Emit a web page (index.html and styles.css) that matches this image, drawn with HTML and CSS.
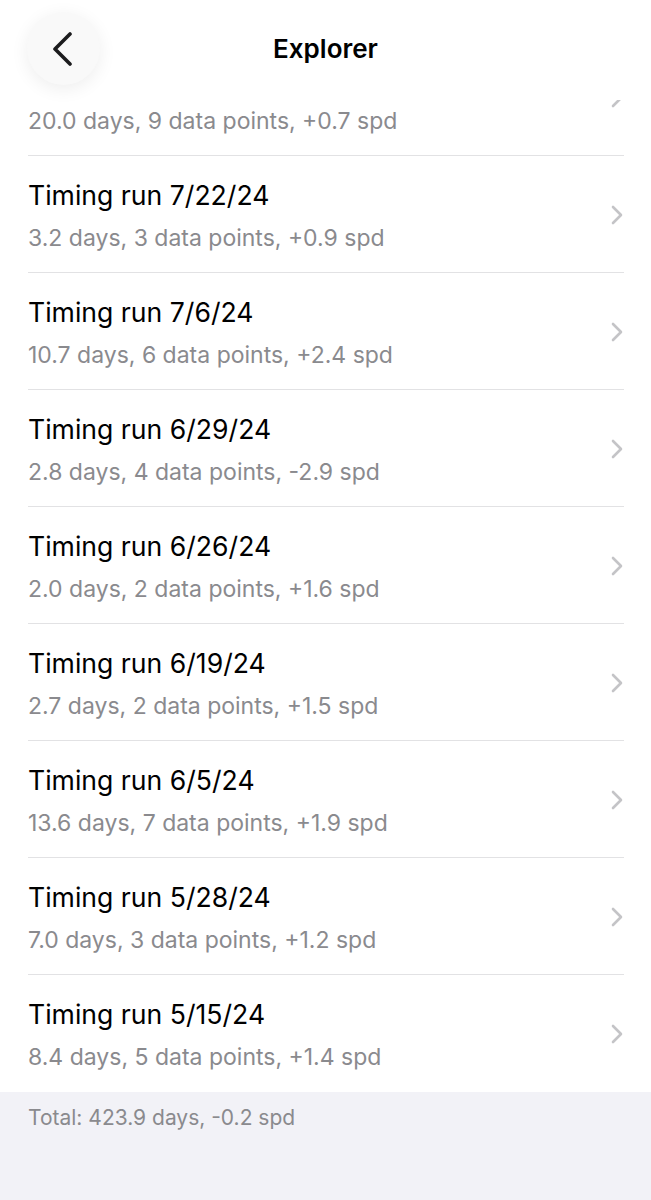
FILE: index.html
```html
<!DOCTYPE html>
<html lang="en">
<head>
<meta charset="UTF-8" />
<meta name="viewport" content="width=device-width, initial-scale=1.0"/>
<title>Explorer</title>
<link rel="stylesheet" href="styles.css">
</head>
<body>

<div class="header">
<button class="back-btn" aria-label="Back">
<svg width="22" height="34" viewBox="0 0 22 34"><path d="M19 2 L4 17 L19 32" fill="none" stroke="#1c1c1e" stroke-width="3.6" stroke-linecap="round" stroke-linejoin="round"/></svg>
</button>
<h1>Explorer</h1>
</div>

<div class="list">
<div class="row"><div class="text"><div class="title">Timing run 8/11/24</div><div class="sub">20.0 days, 9 data points, +0.7 spd</div></div><svg class="chev" width="14" height="22" viewBox="0 0 14 22"><path d="M3 3 L11 11 L3 19" fill="none" stroke="#c4c4c7" stroke-width="2.6" stroke-linecap="round" stroke-linejoin="round"/></svg></div>
<div class="row"><div class="text"><div class="title">Timing run 7/22/24</div><div class="sub">3.2 days, 3 data points, +0.9 spd</div></div><svg class="chev" width="14" height="22" viewBox="0 0 14 22"><path d="M3 3 L11 11 L3 19" fill="none" stroke="#c4c4c7" stroke-width="2.6" stroke-linecap="round" stroke-linejoin="round"/></svg></div>
<div class="row"><div class="text"><div class="title">Timing run 7/6/24</div><div class="sub">10.7 days, 6 data points, +2.4 spd</div></div><svg class="chev" width="14" height="22" viewBox="0 0 14 22"><path d="M3 3 L11 11 L3 19" fill="none" stroke="#c4c4c7" stroke-width="2.6" stroke-linecap="round" stroke-linejoin="round"/></svg></div>
<div class="row"><div class="text"><div class="title">Timing run 6/29/24</div><div class="sub">2.8 days, 4 data points, -2.9 spd</div></div><svg class="chev" width="14" height="22" viewBox="0 0 14 22"><path d="M3 3 L11 11 L3 19" fill="none" stroke="#c4c4c7" stroke-width="2.6" stroke-linecap="round" stroke-linejoin="round"/></svg></div>
<div class="row"><div class="text"><div class="title">Timing run 6/26/24</div><div class="sub">2.0 days, 2 data points, +1.6 spd</div></div><svg class="chev" width="14" height="22" viewBox="0 0 14 22"><path d="M3 3 L11 11 L3 19" fill="none" stroke="#c4c4c7" stroke-width="2.6" stroke-linecap="round" stroke-linejoin="round"/></svg></div>
<div class="row"><div class="text"><div class="title">Timing run 6/19/24</div><div class="sub">2.7 days, 2 data points, +1.5 spd</div></div><svg class="chev" width="14" height="22" viewBox="0 0 14 22"><path d="M3 3 L11 11 L3 19" fill="none" stroke="#c4c4c7" stroke-width="2.6" stroke-linecap="round" stroke-linejoin="round"/></svg></div>
<div class="row"><div class="text"><div class="title">Timing run 6/5/24</div><div class="sub">13.6 days, 7 data points, +1.9 spd</div></div><svg class="chev" width="14" height="22" viewBox="0 0 14 22"><path d="M3 3 L11 11 L3 19" fill="none" stroke="#c4c4c7" stroke-width="2.6" stroke-linecap="round" stroke-linejoin="round"/></svg></div>
<div class="row"><div class="text"><div class="title">Timing run 5/28/24</div><div class="sub">7.0 days, 3 data points, +1.2 spd</div></div><svg class="chev" width="14" height="22" viewBox="0 0 14 22"><path d="M3 3 L11 11 L3 19" fill="none" stroke="#c4c4c7" stroke-width="2.6" stroke-linecap="round" stroke-linejoin="round"/></svg></div>
<div class="row"><div class="text"><div class="title">Timing run 5/15/24</div><div class="sub">8.4 days, 5 data points, +1.4 spd</div></div><svg class="chev" width="14" height="22" viewBox="0 0 14 22"><path d="M3 3 L11 11 L3 19" fill="none" stroke="#c4c4c7" stroke-width="2.6" stroke-linecap="round" stroke-linejoin="round"/></svg></div>
</div>

<div class="footer">Total: 423.9 days, -0.2 spd</div>

</body>
</html>
```

FILE: styles.css
```css
* {
box-sizing: border-box;
}
body {
margin: 0;
background-color: #f2f2f7;
font-family: 'Inter', 'Noto Sans', sans-serif;
color: #000;
min-height: 100vh;
}

.header {
position: fixed;
top: 0;
left: 0;
right: 0;
height: 100px;
background-color: #fff;
z-index: 10;
display: flex;
align-items: center;
justify-content: center;
}

.header h1 {
margin: 0;
font-size: 26px;
font-weight: 600;
margin-top: -4px;
}

.back-btn {
position: absolute;
left: 27px;
top: 12px;
width: 73px;
height: 73px;
border-radius: 50%;
border: none;
background-color: #f9f9f9;
box-shadow: 0 4px 18px rgba(0, 0, 0, 0.07);
display: flex;
align-items: center;
justify-content: center;
padding: 0 4px 0 0;
cursor: pointer;
}

.list {
background-color: #fff;
padding-top: 39px;
}

.row {
height: 117px;
margin-left: 28px;
padding-right: 27px;
display: flex;
align-items: center;
}

.row .text {
flex: 1;
height: 100%;
padding-top: 22px;
border-bottom: 1px solid #e2e2e4;
}

.row:last-child .text {
border-bottom: none;
}

.title {
font-size: 26.6px;
line-height: 34px;
}

.sub {
font-size: 23px;
line-height: 28px;
color: #8a8a8e;
margin-top: 12px;
}

.chev {
display: block;
align-self: stretch;
width: 14px;
height: 22px;
padding-top: 48px;
padding-bottom: 46px;
box-sizing: content-box;
border-bottom: 1px solid #e2e2e4;
}

.row:last-child .chev {
border-bottom: none;
}

.footer {
padding: 13px 28px;
font-size: 21px;
line-height: 26px;
color: #8a8a8e;
}
```
